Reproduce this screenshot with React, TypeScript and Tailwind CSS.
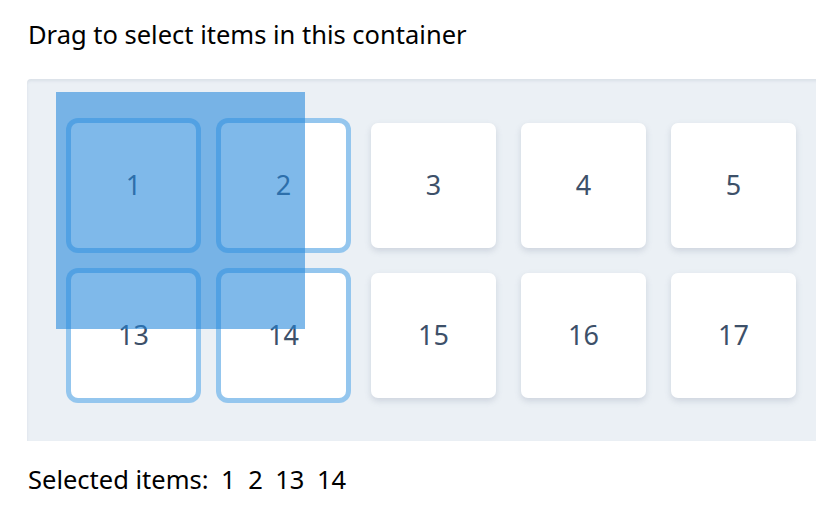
// App.tsx

// only the columns that fit in the viewport are drawn; the row goes on past the edge
const rows = [
  [1, 2, 3, 4, 5],
  [13, 14, 15, 16, 17],
];

const selected = [1, 2, 13, 14];

const Item = ({ n }: { n: number }) => {
  const isSelected = selected.includes(n);
  return (
    <div
      className={`w-[125px] h-[125px] shrink-0 bg-white rounded-[7px] flex items-center justify-center text-[27px] text-[#3d5069] ${
        isSelected ? 'ring-[5px] ring-[#94c6ee]' : 'shadow-[0_3px_6px_rgba(100,116,139,0.22)]'
      }`}
    >
      {n}
    </div>
  );
};

const App = () => {
  return (
    <div
      className="w-[816px] h-[524px] overflow-hidden bg-white text-black"
      style={{ fontFamily: '"Noto Sans", "Open Sans", sans-serif' }}
    >
      <div className="pl-[27px] pt-[16px]">
        <p className="text-[25.5px] leading-[36px] pl-[1px]">Drag to select items in this container</p>

        <div className="relative mt-[27px] w-[1900px] bg-[#ebf0f5] rounded-tl-[4px] shadow-[inset_0_2px_3px_rgba(100,116,139,0.12)] p-[44px] pb-[43px] flex flex-col gap-[25px]">
          {rows.map((row, i) => (
            <div key={i} className="flex gap-[25px]">
              {row.map((n) => (
                <Item key={n} n={n} />
              ))}
            </div>
          ))}

          {/* selection box */}
          <div className="absolute left-[29px] top-[13px] w-[249px] h-[237px] bg-[#2387db]/[0.58]" />
        </div>

        <p className="mt-[20px] text-[25.5px] leading-[36px] pl-[1px]">
          Selected items:
          {selected.map((n) => (
            <span key={n} className="ml-[12.5px]">
              {n}
            </span>
          ))}
        </p>
      </div>
    </div>
  );
};

export default App;
